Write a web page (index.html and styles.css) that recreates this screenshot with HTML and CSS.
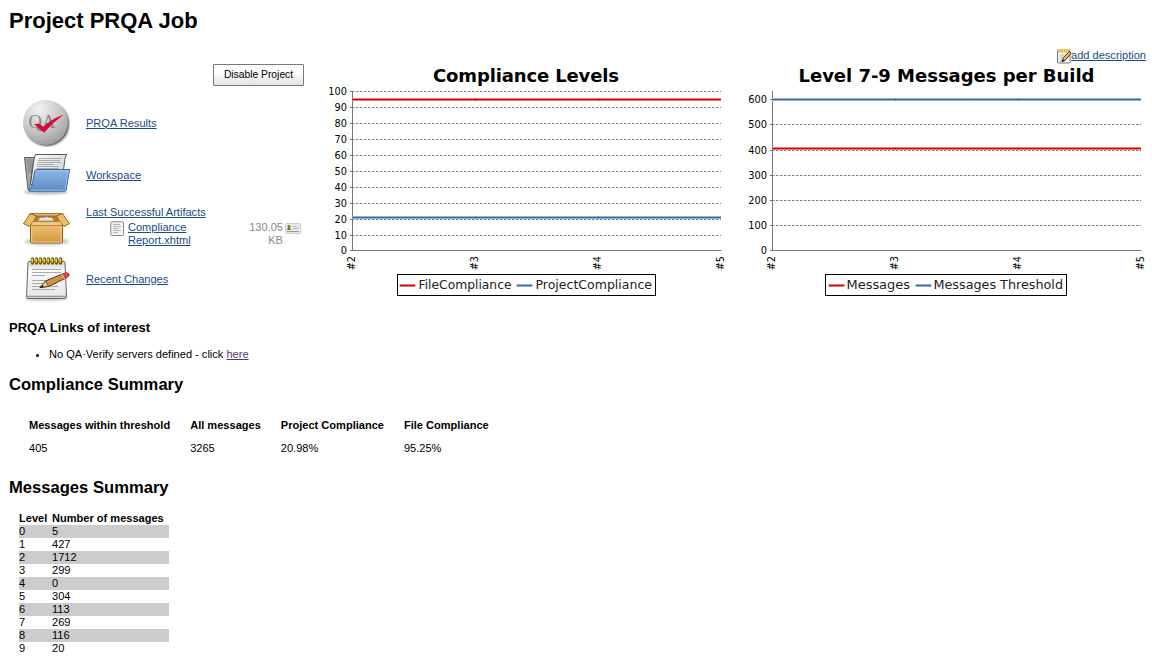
FILE: index.html
```html
<!DOCTYPE html>
<html lang="en">
<head>
<meta charset="utf-8">
<title>Project PRQA Job</title>
<link rel="stylesheet" href="styles.css">
</head>
<body>
<main class="page">
  <h1 class="title">Project PRQA Job</h1>
  <div class="description">
    <svg class="note-icon" width="16" height="16" viewBox="0 1 16 16">
      <rect x="1.500" y="2" width="12.500" height="13" rx=".8" fill="#f7f7f5" stroke="#777"/>
      <path d="M1.500 3h12.500" stroke="#d8ae32" stroke-width="3"/>
      <path d="M3 1v3M5.200 1v3M7.400 1v3M9.600 1v3M11.800 1v3" stroke="#f9e68b" stroke-width="1"/>
      <path d="M3.500 7h7M3.500 9h5M3.500 11h4M3.500 13h6" stroke="#bbb"/>
      <path d="M6 13.500l1.500-3.800L13.300 3.500l2 1.800-6 6.800z" fill="#e4b56b" stroke="#4d3a1b" stroke-width="1"/>
      <path d="M5.700 14l1.200-2.600 1.600 1.400z" fill="#111"/>
    </svg><a class="link" href="#">add description</a>
  </div>
  <section class="overview">
    <div class="side">
      <button class="disable" type="button">Disable Project</button>
      <ul class="tasks">
        <li class="task">
          <svg width="48" height="48" viewBox="0 0 48 48">
            <defs>
              <radialGradient id="ball" cx=".36" cy=".2" r=".85"><stop offset="0" stop-color="#f1f1f1"/><stop offset=".55" stop-color="#c9c9c9"/><stop offset="1" stop-color="#999"/></radialGradient>
              <filter id="soft" x="-20%" y="-20%" width="140%" height="140%"><feGaussianBlur stdDeviation=".9"/></filter>
            </defs>
            <circle cx="25" cy="25" r="22" fill="#333" opacity=".9" filter="url(#soft)"/>
            <circle cx="23.500" cy="23.500" r="22.500" fill="url(#ball)"/>
            <text class="qa" x="6.500" y="28.500" textLength="27" lengthAdjust="spacingAndGlyphs">QA</text>
            <path d="M12 25l5-.3 4.500 3Q29 20 41.500 15.800 31 23.500 22 33.700z" fill="#d60b38"/>
          </svg>
          <a class="link" href="#">PRQA Results</a>
        </li>
        <li class="task">
          <svg width="48" height="48" viewBox="0 0 48 48">
            <defs><linearGradient id="folder" x2="0" y2="1"><stop offset="0" stop-color="#8db5e3"/><stop offset="1" stop-color="#5b8cc8"/></linearGradient>
            <linearGradient id="sheet" x2="1" y2="1"><stop offset="0" stop-color="#fff"/><stop offset="1" stop-color="#c8c8c8"/></linearGradient></defs>
            <ellipse cx="24" cy="41" rx="22" ry="2.500" fill="#bbb" filter="url(#soft)"/>
            <path d="M2.500 6.500h12l-4 10-3 22H6z" fill="#aaa" stroke="#5c5c5c"/>
            <path d="M4.500 9h8M4.800 11h7M5 13h7M5.200 15h6M5.500 17h5M5.700 19h5M5.900 21h4" stroke="#777" stroke-width=".8"/>
            <path d="M13.500 3.500h31q-2 4-2 8l-3 22H8.500l3-22q.5-5 2-8z" fill="url(#sheet)" stroke="#555"/>
            <path d="M17 7.500h23M16 9.500h22M15.500 11.500h24M15 13.500h17M15 15.500h22M14.500 17.500h22" stroke="#999" stroke-width=".8"/>
            <path d="M14.500 18.500h33.500q-1 2-1.500 6l-2.200 14q-.4 1.700-2 1.700H7.800q-1.500-.2-1.200-1.500 3-1 4-7l2-11q.3-2 1.900-2.200z" fill="url(#folder)" stroke="#3567a5"/>
            <path d="M14.800 19.700h31.700q-.8 2-1.200 5l-2 13q-.2 1.500-1.500 1.500H9" fill="none" stroke="#a9c9ee" stroke-width=".8"/>
          </svg>
          <a class="link" href="#">Workspace</a>
        </li>
        <li class="task">
          <svg width="48" height="48" viewBox="0 0 48 48">
            <defs><linearGradient id="box" x2="0" y2="1"><stop offset="0" stop-color="#efc37b"/><stop offset="1" stop-color="#d39a3d"/></linearGradient></defs>
            <ellipse cx="25" cy="38.500" rx="22" ry="4" fill="#ccc" filter="url(#soft)"/>
            <path d="M8.500 12h32v8H8.500z" fill="#b47b2d"/>
            <path d="M16 18q1-5 6-3.500 3-1.500 5 0 4-1 5 3.500z" fill="#e7e7e1" stroke="#999280" stroke-width=".8"/>
            <path d="M8.500 20h32v18.500q0 1.500-1.500 1.500H10q-1.500 0-1.500-1.500z" fill="url(#box)" stroke="#945b13"/>
            <path d="M9.500 21h30M9.700 21v18h29.600v-18" fill="none" stroke="#f5d7a3" stroke-width=".8"/>
            <path d="M8 10.500h33l-2.500 2.500h-28z" fill="#e5b464" stroke="#94601e" stroke-width=".8"/>
            <path d="M8 10.500Q5 16 1.500 20.500l5.500 3Q13 18 14.500 13z" fill="#edbc6d" stroke="#94601e"/>
            <path d="M40.500 10.500Q44 16 47.500 20.500l-5.500 3Q36 18 34.500 13z" fill="#edbc6d" stroke="#94601e"/>
            <path d="M10.500 18.500h28l2 4h-32z" fill="#f0c681" stroke="#ae7429" stroke-width=".8"/>
          </svg>
          <div class="artifacts">
            <a class="link" href="#">Last Successful Artifacts</a>
            <div class="artifact">
              <svg width="16" height="16" viewBox="0 0 16 16"><rect x=".8" y=".8" width="12.700" height="13.700" rx=".8" fill="#f5f5f5" stroke="#888"/><path d="M3 3.500h7M3 5.500h8M3 7.500h6M3 9.500h8M3 11.500h5" stroke="#b5b5b5"/></svg>
              <a class="link file" href="#">Compliance Report.xhtml</a>
              <span class="size">130.05 KB</span>
              <svg width="16" height="16" viewBox="0 0 16 16"><rect x=".5" y="2.500" width="15" height="10" rx="1" fill="#e9e9e9" stroke="#ccc"/><circle cx="4" cy="5.500" r="1.500" fill="#8c6c23"/><path d="M2.200 9q0-2.500 1.800-2.500T5.800 9z" fill="#6e7631"/><path d="M7.500 5.500h4M7.500 7.500h6" stroke="#bbb"/><path d="M2 10.500h12" stroke="#999"/></svg>
            </div>
          </div>
        </li>
        <li class="task">
          <svg width="48" height="48" viewBox="0 0 48 48">
            <defs><linearGradient id="pad" x2="0" y2="1"><stop offset="0" stop-color="#d4d4d4"/><stop offset=".25" stop-color="#fafafa"/><stop offset="1" stop-color="#e5e5e5"/></linearGradient></defs>
            <ellipse cx="24" cy="44" rx="21" ry="2" fill="#ccc" filter="url(#soft)"/>
            <path d="M7 6.500h35q.9 0 1 1l1.500 34q0 2-1.500 2H6q-1.800 0-1.500-2L6 7.500q.1-1 1-1z" fill="url(#pad)" stroke="#666"/>
            <path d="M5 41.500h39.500" stroke="#999" stroke-width="1.500"/>
            <path d="M10 14.500h29M10 17.500h29M10 20.500h13M10 25.500h28M10 28.500h24M10 31.500h26M10 34.500h23" stroke="#aaa"/>
            <path d="M10.500 4v4M14.500 4v4M18.500 4v4M22.500 4v4M26.500 4v4M30.500 4v4M34.500 4v4M38.500 4v4" stroke="#6d5c12" stroke-width="3.400" stroke-linecap="round"/>
            <path d="M10.200 4v3M14.200 4v3M18.200 4v3M22.200 4v3M26.200 4v3M30.200 4v3M34.200 4v3M38.200 4v3" stroke="#ead23c" stroke-width="1.600" stroke-linecap="round"/>
            <path d="M18 32.500l5.500-6.500 18-7.500 2.500 4.500-17.500 8.500z" fill="#cf9546" stroke="#573516"/>
            <path d="M18 32.500l5.500-6.500 3 5.300z" fill="#e9cda0" stroke="#573516" stroke-width=".7"/>
            <path d="M17.600 32.900l3-3 1 2z" fill="#111"/>
            <path d="M39.500 19.300l1.500-.6 2.500 4.600-1.500.7z" fill="#bbb"/>
            <path d="M41 18.700l3-1.200q3 0 3.500 2.500 0 1.500-4 3.400z" fill="#e63b43" stroke="#9b3035" stroke-width=".6"/>
          </svg>
          <a class="link" href="#">Recent Changes</a>
        </li>
      </ul>
    </div>
    <svg class="chart" width="420" height="240" viewBox="0 0 420 240">
      <text class="chart-title" x="113" y="22" textLength="186">Compliance Levels</text>
      <g class="grid"><path d="M32 31.500h369M32 47.500h369M32 63.500h369M32 79.500h369M32 95.500h369M32 111.500h369M32 127.500h369M32 143.500h369M32 159.500h369M32 175.500h369"/></g>
      <path class="axis" d="M32.500 31v160M30 190.500h371.500M30 31.500h2M30 47.500h2M30 63.500h2M30 79.500h2M30 95.500h2M30 111.500h2M30 127.500h2M30 143.500h2M30 159.500h2M30 175.500h2"/>
      <g class="ticks"><text x="27" y="35">100</text><text x="27" y="51">90</text><text x="27" y="67">80</text><text x="27" y="83">70</text><text x="27" y="99">60</text><text x="27" y="115">50</text><text x="27" y="131">40</text><text x="27" y="147">30</text><text x="27" y="163">20</text><text x="27" y="179">10</text><text x="27" y="194">0</text></g>
      <g class="red"><path class="halo" d="M32 39.500h369"/><path d="M32 39.500h369"/><path class="dots" d="M155 39.500h1M278 39.500h1"/></g>
      <g class="blue"><path class="halo" d="M32 157.500h369"/><path d="M32 157.500h369"/><path class="dots" d="M155 157.500h1M278 157.500h1"/></g>
      <g class="builds"><text transform="translate(35 196) rotate(-90)">#2</text><text transform="translate(158 196) rotate(-90)">#3</text><text transform="translate(281 196) rotate(-90)">#4</text><text transform="translate(404 196) rotate(-90)">#5</text></g>
      <rect class="legend-box" x="77.500" y="214.500" width="258" height="21"/>
      <g class="red"><path class="halo" d="M79.500 225.500h16"/><path d="M80 225.500h15"/></g>
      <text class="legend" x="98.500" y="229" textLength="93" lengthAdjust="spacingAndGlyphs">FileCompliance</text>
      <g class="blue"><path class="halo" d="M196.500 225.500h16"/><path d="M197 225.500h15"/></g>
      <text class="legend" x="215.500" y="229" textLength="116.500" lengthAdjust="spacingAndGlyphs">ProjectCompliance</text>
    </svg>
    <svg class="chart" width="412" height="240" viewBox="0 0 412 240">
      <text class="chart-title" x="58.500" y="22" textLength="296">Level 7-9 Messages per Build</text>
      <g class="grid"><path d="M32 39.500h369M32 64.500h369M32 90.500h369M32 115.500h369M32 140.500h369M32 165.500h369"/></g>
      <path class="axis" d="M32.500 31v160M30 190.500h371.500M30 39.500h2M30 64.500h2M30 90.500h2M30 115.500h2M30 140.500h2M30 165.500h2"/>
      <g class="ticks"><text x="27" y="43">600</text><text x="27" y="68">500</text><text x="27" y="93.500">400</text><text x="27" y="119">300</text><text x="27" y="144">200</text><text x="27" y="169">100</text><text x="27" y="194">0</text></g>
      <g class="blue"><path class="halo" d="M32 39.500h369"/><path d="M32 39.500h369"/><path class="dots" d="M155 39.500h1M278 39.500h1"/></g>
      <g class="red"><path class="halo" d="M32 88.500h369"/><path d="M32 88.500h369"/><path class="dots" d="M155 88.500h1M278 88.500h1"/></g>
      <g class="builds"><text transform="translate(35 196) rotate(-90)">#2</text><text transform="translate(158 196) rotate(-90)">#3</text><text transform="translate(281 196) rotate(-90)">#4</text><text transform="translate(404 196) rotate(-90)">#5</text></g>
      <rect class="legend-box" x="85.500" y="214.500" width="241" height="21"/>
      <g class="red"><path class="halo" d="M88.500 225.500h16"/><path d="M89 225.500h15"/></g>
      <text class="legend" x="106.500" y="229" textLength="63.500" lengthAdjust="spacingAndGlyphs">Messages</text>
      <g class="blue"><path class="halo" d="M175.500 225.500h16"/><path d="M176 225.500h15"/></g>
      <text class="legend" x="193.500" y="229" textLength="129.500" lengthAdjust="spacingAndGlyphs">Messages Threshold</text>
    </svg>
  </section>

  <h3 class="links-title">PRQA Links of interest</h3>
  <ul class="links"><li>No QA·Verify servers defined - click <a class="visited" href="#">here</a></li></ul>

  <h2 class="heading">Compliance Summary</h2>
  <table class="compliance">
    <tr><th>Messages within threshold</th><th>All messages</th><th>Project Compliance</th><th>File Compliance</th></tr>
    <tr><td>405</td><td>3265</td><td>20.98%</td><td>95.25%</td></tr>
  </table>

  <h2 class="heading">Messages Summary</h2>
  <table class="levels">
    <thead><tr><th>Level</th><th>Number of messages</th></tr></thead>
    <tbody>
      <tr><td>0</td><td>5</td></tr>
      <tr><td>1</td><td>427</td></tr>
      <tr><td>2</td><td>1712</td></tr>
      <tr><td>3</td><td>299</td></tr>
      <tr><td>4</td><td>0</td></tr>
      <tr><td>5</td><td>304</td></tr>
      <tr><td>6</td><td>113</td></tr>
      <tr><td>7</td><td>269</td></tr>
      <tr><td>8</td><td>116</td></tr>
      <tr><td>9</td><td>20</td></tr>
    </tbody>
  </table>
</main>
</body>
</html>
```
FILE: styles.css
```css
body {
  margin: 0;
  background: #fff;
  color: #000;
  font: 11.050px/13px "Liberation Sans", Arial, sans-serif;
}
.page { padding: 8px 0 0 9px; }
.title { margin: 0; font-size: 22px; line-height: 26px; }
.link { color: #204a87; }
.visited { color: #5c3566; }
.description {
  display: flex;
  justify-content: flex-end;
  height: 16px;
  margin-top: 15px;
  padding-right: 6px;
}
.note-icon { margin-right: -1px; }

.overview {
  display: grid;
  grid-template-columns: 311px 420px 412px;
  height: 245px;
  margin-top: -5px;
}
.chart { display: block; overflow: visible; }
.side { padding-top: 4px; }
.disable {
  display: block;
  width: 91px;
  height: 22px;
  margin-left: 204px;
  padding: 0 0 1px;
  border: 1px solid #777;
  border-radius: 1px;
  background: linear-gradient(#fff 35%, #e2e2e2);
  color: #000;
  font: 10.300px/18px "Liberation Sans", Arial, sans-serif;
}
.tasks { margin: 11px 0 0; padding: 0 0 0 13px; list-style: none; }
.task { display: flex; align-items: center; gap: 16px; height: 52px; }
.task > svg { flex: none; }
.artifacts { width: 216px; margin-top: -2px; }
.artifact {
  display: grid;
  grid-template-columns: 18px 90px 65px 18px;
  padding: 2px 0 0 24px;
}
.size { padding-left: 30px; color: #888; text-align: right; }
.artifact > svg:last-child { margin-left: 2px; }

.qa { font: 18px "Liberation Serif", serif; fill: #858585; }
.chart-title { font: bold 18px "DejaVu Sans", sans-serif; }
.grid path { fill: none; stroke: #808080; stroke-dasharray: 2.500 1.500; }
.axis { fill: none; stroke: #777; }
.ticks { font: 9.800px "DejaVu Sans", sans-serif; text-anchor: end; }
.builds { font: 9.700px "DejaVu Sans", sans-serif; text-anchor: end; }
.legend { font: 12px "DejaVu Sans", sans-serif; fill: #222; }
.legend-box { fill: #fff; stroke: #000; }
.red path { fill: none; stroke: #c00; }
.blue path { fill: none; stroke: #3465a4; }
.red .halo { stroke: #ee8080; stroke-width: 3; }
.blue .halo { stroke: #98b5d9; stroke-width: 3; }
.red .dots, .blue .dots { stroke-width: 3; opacity: .5; }

.links-title { margin: 15px 0 0; font-size: 13px; line-height: 16px; }
.links { margin: 12px 0 0; padding-left: 40px; }
.heading { margin: 14px 0 0; font-size: 16.600px; line-height: 20px; }
.compliance { margin: 19px 0 0 10px; border-spacing: 0; }
.compliance th, .compliance td { padding: 5px 10px; line-height: 13px; text-align: left; }
.compliance + .heading { margin-top: 18px; }
.levels { width: 150px; margin: 14px 0 0 10px; border-spacing: 0; }
.levels th, .levels td { padding: 0; text-align: left; }
.levels th:first-child { width: 33px; }
.levels tbody tr:nth-child(odd) { background: #ccc; }
```
